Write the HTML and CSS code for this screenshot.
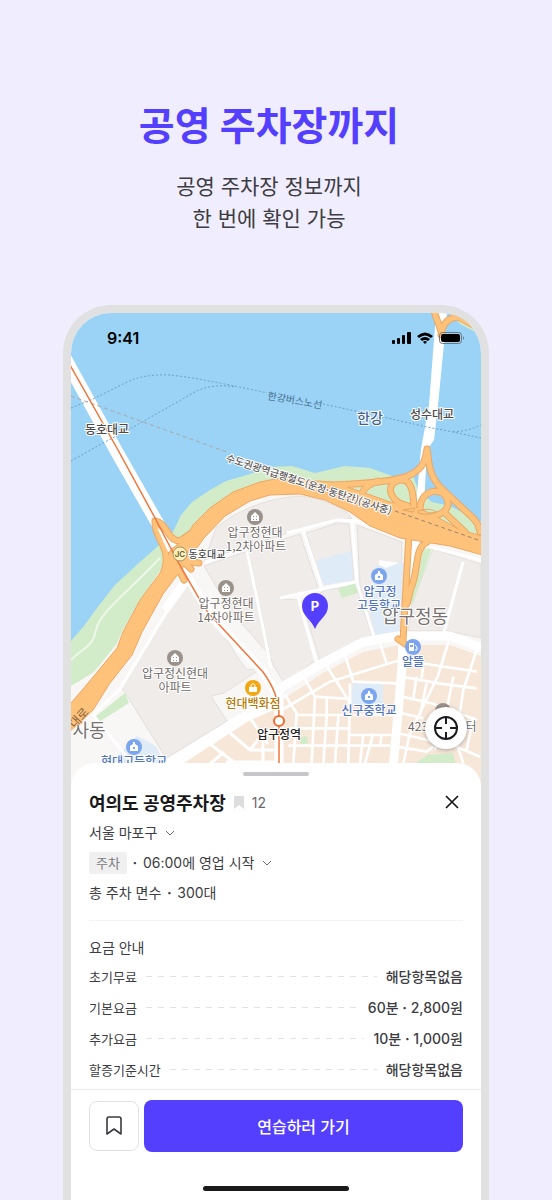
FILE: index.html
```html
<!DOCTYPE html>
<html lang="ko">

<head>
    <meta charset="UTF-8">
    <meta name="viewport" content="width=device-width, initial-scale=1">
    <title>공영 주차장까지</title>
    <link rel="stylesheet" href="styles.css">
</head>

<body>

    <header class="hero">
        <h1>공영 주차장까지</h1>
        <p>공영 주차장 정보까지<br>한 번에 확인 가능</p>
    </header>

    <main class="phone">

        <div class="map">
            <svg class="map-canvas" viewBox="71 313 410 474" preserveAspectRatio="xMidYMid slice" role="img" aria-label="압구정동 지도">
                <rect x="71" y="313" width="410" height="474" fill="#9ad3f6" />

                <!-- Tierra y parques -->
                <path fill="#d2ecc9" d="M71 641L84 626L97 608L115 585L140 562L157 547L173 532L181 515L192 502L210 490L226 481L250 474L270 467L292 466L315 473L345 466L370 468L395 477L412 472L418 490L432 502L450 506L481 522V600H180L71 740Z" />
                <path fill="#f8f7f6" d="M71 686L94 672L116 645L123 630L140 600L160 571L177 550L195 525L233 494L280 484L340 495L400 520L481 545V787H71Z" />
                <path fill="#d2ecc9" d="M450 313H481V335L460 324Z" />
                <path class="park-path" d="M71 660C86 645 92 648 96 630S125 595 160 558" />

                <!-- Manzanas -->
                <g class="block">
                    <path d="M204 562L216 528C240 508 270 498 300 496C330 500 345 510 352 518L288 533L205 560Z" />
                    <path d="M171 604L190 576L236 655L247 670L262 668L224 693L211 696L227 721L166 758L122 688Z" />
                    <path d="M204 566L248 551L268 635L267 652L232 613Z" />
                    <path d="M248 550L300 534L318 588L281 599L299 600L315 661L284 683L272 663Z" />
                    <path d="M306 533L338 523L349 524L354 580L322 584Z" />
                    <path d="M357 525L402 542L400 634L374 637L360 586Z" />
                    <path d="M326 590L356 585L372 637L320 661L302 602Z" />
                    <path d="M433 549L481 564V638L448 631L408 631L412 604Z" />
                </g>
                <g fill="#dfebf6">
                    <path d="M317 560L351 551L353 580L322 586Z" />
                    <path d="M376 566L404 562L400 634L376 637L369 610Z" />
                    <path d="M116 757L137 736L156 746L165 765H110Z" />
                </g>
                <g fill="#d2ecc9">
                    <path d="M432 548L413 603L409 605L423 549Z" />
                    <path d="M338 589L355 583L358 593L342 598Z" />
                    <path d="M95 717L125 693L129 703L99 722Z" />
                </g>
                <path fill="#ffffff" d="M379 560L399 563L386 568L379 565Z" />

                <!-- Calles blancas -->
                <g class="street">
                    <path d="M287 533L337 520L357 521L403 538" />
                    <path d="M303 530L322 587M352 520L357 583L374 637M280 598L355 582M298 597L317 665" />
                    <path d="M430 547L481 560M463 562L444 632" />
                    <path d="M205 562L248 548M247 551L263 627L271 668M172 603L120 689L93 715L132 763" />
                </g>
                <path class="street-wide" d="M178 562L212 617L263 672L276 692M190 575L165 610" />

                <!-- Barrio del sur -->
                <path fill="#f7e7d9" d="M170 770L227 735L282 700L323 673L363 652L400 645L450 645L481 656V787H165Z" />
                <path fill="#dfebf6" d="M353 683H383V705H351Z" />
                <path fill="#d2ecc9" d="M412 765L428 755L453 753L456 765ZM298 738L307 736L308 743L302 745Z" />
                <g class="street" transform="translate(270 600) scale(.3333)">
                    <path d="M35 330L180 245L390 180L620 215M165 190L235 300L240 320M225 165L250 245L380 250M330 130L350 190" />
                    <path d="M45 285L80 340L70 490M100 230L135 290L240 297M135 290L125 490M80 345H240M170 290V350L160 490M240 300L235 490M205 350L195 490" />
                    <path d="M60 385H235M55 437H360M240 405H365M310 400L285 490M280 405L270 490M335 405L330 440" />
                    <path d="M240 250V350M250 345H370M540 110L505 225L420 400L400 490M395 230L505 250L620 265M395 290L485 310L620 360" />
                    <path d="M440 230L430 295M395 340L460 355M470 250L450 345M385 400L560 440L630 470M380 440L470 455L490 440" />
                    <path d="M620 150L580 270L565 370M550 230L530 330M460 190L455 235M560 430L580 490M610 350L590 450M500 420L495 450" />
                </g>
                <g class="street">
                    <path d="M180 764L210 744L235 763M209 745L250 718L268 744M230 733L250 750H281M250 719L279 706M210 764L224 752M250 750L262 735H280M226 762H276M263 737V765" />
                </g>
                <path class="street-wide" d="M160 769L227 727L273 700L282 687L323 663L363 642L397 636L450 636L481 648" />
                <path class="street-wide" d="M403 640L402 667L393 770M279 695V770" />

                <!-- Puentes -->
                <path class="bridge" d="M60 349L118 454L158 524L182 570" />
                <path fill="#ffffff" d="M436 313H447L438 405L434 440L427 450L424 505H416L421 449L423 438L429 405Z" />
                <path fill="#ffffff" d="M412 536H420L413 570L409 603H404Z" />

                <!-- Autopista y rampas -->
                <g class="ramp-edge">
                    <path d="M434 311L442 334M441 335Q443 318 458 317L473 325" />
                    <path d="M427 449C425 463 422 468 412 474S380 483 333 485M427 449C429 466 430 476 440 487L473 518Q479 524 480 532" />
                    <path d="M361 495Q365 485 378 481M408 506C390 502 385 486 397 481S413 487 414 506M420 508C421 490 440 487 446 497S444 516 428 516" />
                    <path d="M446 514L465 532" />
                    <path d="M409 535L405 603L403 641M427 542C414 548 419 570 411 588L407 604M398 639L405 644" />
                    <path d="M155 521C154 542 175 546 162 578M155 521C168 523 166 540 180 541L196 530M184 561L199 563M184 562L191 569M177 566L184 580" />
                </g>
                <path class="highway" d="M66 709L94 676L117 648L123 632L140 600L160 573L171 549L185 540L193 525L210 508L233 492L260 482L280 478L303 480L333 482L362 492L390 502L413 506L432 514L460 530L486 537V556L450 546L400 538L370 526L350 512L325 500L300 494L270 495L250 501L225 516L204 538L187 562L163 594L142 632L132 655L110 683L93 710L66 735Z" />
                <g class="ramp">
                    <path d="M434 311L442 334M441 335Q443 318 458 317L473 325" />
                    <path d="M427 449C425 463 422 468 412 474S380 483 333 485M427 449C429 466 430 476 440 487L473 518Q479 524 480 532" />
                    <path d="M361 495Q365 485 378 481M408 506C390 502 385 486 397 481S413 487 414 506M420 508C421 490 440 487 446 497S444 516 428 516" />
                    <path d="M446 514L465 532" />
                    <path d="M409 535L405 603L403 641M427 542C414 548 419 570 411 588L407 604M398 639L405 644" />
                    <path d="M155 521C154 542 175 546 162 578M155 521C168 523 166 540 180 541L196 530M184 561L199 563M184 562L191 569M177 566L184 580" />
                </g>
                <path fill="#ffffff" d="M157 527L163 533L169 543L171 549L168 552L163 541Z" />
                <path d="M403 510L415 508L413 512ZM418 511Q428 507 437 512Q428 516 418 513Z" fill="none" stroke="#e5a866" />

                <!-- Rutas de barco y tren -->
                <g class="ferry">
                    <path d="M71 461L103 443L137 425L193 393Q210 383 235 387M71 408L93 399L127 382Q143 374 170 375Q200 378 267 393" />
                    <path d="M323 404L383 417L427 427L453 432L481 438M453 432Q468 431 481 425" />
                </g>
                <path class="rail" d="M71 396L143 422L227 452" />
                <path class="rail rail-land" d="M395 511L481 541" />
                <path class="metro" d="M66 358L118 450L155 518L178 562L200 600Q206 611 213 618L263 672Q279 694 279 715V787" />

                <!-- Iconos -->
                <g fill="#9a928a">
                    <circle cx="255" cy="517" r="8" />
                    <circle cx="226" cy="588" r="8" />
                    <circle cx="175" cy="658" r="8" />
                    <circle cx="443" cy="711" r="8" />
                </g>
                <g class="house">
                    <path d="M251 516L255 512L259 516V521H251Z" />
                    <path d="M222 587L226 583L230 587V592H222Z" />
                    <path d="M171 657L175 653L179 657V662H171Z" />
                </g>
                <g fill="#9a928a">
                    <path d="M253 516H254V517H253ZM256 516H257V517H256ZM253 519H254V520H253ZM256 519H257V520H256Z" />
                    <path d="M224 587H225V588H224ZM227 587H228V588H227ZM224 590H225V591H224ZM227 590H228V591H227Z" />
                    <path d="M173 657H174V658H173ZM176 657H177V658H176ZM173 660H174V661H173ZM176 660H177V661H176Z" />
                </g>
                <g fill="#7ba5ee">
                    <circle cx="379" cy="576" r="8" />
                    <circle cx="134" cy="747" r="8" />
                    <circle cx="369" cy="696" r="8" />
                    <circle cx="413" cy="647" r="8" />
                </g>
                <g fill="#ffffff">
                    <path d="M375 575L378 573V571H380V573L383 575V580H375Z" />
                    <path d="M130 746L133 744V742H135V744L138 746V751H130Z" />
                    <path d="M365 695L368 693V691H370V693L373 695V700H365Z" />
                    <path d="M409 643H414V651H409Z" />
                </g>
                <path d="M415 645L417 647V650H415M410 645H413" fill="none" stroke="#ffffff" />
                <path d="M410 645H413V647H410ZM378 576H380V578H378ZM133 747H135V749H133ZM368 696H370V698H368Z" fill="#7ba5ee" />
                <circle cx="253" cy="688" r="8" fill="#f3a712" />
                <path d="M249 687H257V692H249Z" fill="#ffffff" />
                <path d="M251 687V685Q253 682 255 685V687" fill="none" stroke="#ffffff" />
                <circle cx="279" cy="721" r="5" fill="#ffffff" stroke="#ef6b2d" stroke-width="2" />

                <!-- Textos del mapa -->
                <g class="label">
                    <text x="107" y="434">동호대교</text>
                    <text x="432" y="419">성수대교</text>
                    <text class="river" x="370" y="423">한강</text>
                    <text class="route" x="295" y="404" transform="rotate(10 295 400)">한강버스노선</text>
                    <text class="train" x="309" y="488" transform="rotate(18 309 484)">수도권광역급행철도(운정·동탄간)(공사중)</text>
                    <text class="small" x="207" y="558">동호대교</text>
                    <text class="apt" x="255" y="537">압구정현대</text>
                    <text class="apt" x="256" y="551">1,2차아파트</text>
                    <text class="apt" x="226" y="608">압구정현대</text>
                    <text class="apt" x="226" y="622">14차아파트</text>
                    <text class="apt" x="175" y="678">압구정신현대</text>
                    <text class="apt" x="175" y="692">아파트</text>
                    <text class="school" x="380" y="596">압구정</text>
                    <text class="school" x="379" y="610">고등학교</text>
                    <text class="school" x="369" y="715">신구중학교</text>
                    <text class="school" x="413" y="666">알뜰</text>
                    <text class="school" x="134" y="766">현대고등학교</text>
                    <text class="store" x="253" y="708">현대백화점</text>
                    <text class="station" x="279" y="739">압구정역</text>
                    <text class="district" x="415" y="623">압구정동</text>
                    <text class="district" x="89" y="737">사동</text>
                    <text class="road" x="79" y="722" transform="rotate(-47 79 718)">대로</text>
                    <text class="apt" x="418" y="731">423</text>
                    <text class="apt" x="471" y="731">터</text>
                </g>
                <circle cx="180" cy="554" r="7" fill="#fdf0b8" stroke="#a59567" />
                <text class="jc" x="180" y="557">JC</text>

                <path d="M315 629C311 619 302 616 302 606A13 13 0 0 1 328 606C328 616 319 619 315 629Z" fill="#553fff" />
                <text class="pin-text" x="315" y="611">P</text>
            </svg>

            <div class="status-bar">
                <span>9:41</span>
                <svg width="73" height="14" viewBox="0 0 73 14" aria-hidden="true">
                    <rect x="0" y="9" width="3" height="4" rx="1" />
                    <rect x="5" y="7" width="3" height="6" rx="1" />
                    <rect x="10" y="4" width="3" height="9" rx="1" />
                    <rect x="15" y="1" width="4" height="12" rx="1" />
                    <path d="M25 5Q33 -2 41 5L39 7Q33 2 27 7ZM28 8Q33 4 38 8L36 10Q33 8 30 10ZM31 11Q33 9 35 11L33 13Z" />
                    <rect x="47.5" y="1.5" width="22" height="11" rx="3" fill="none" stroke="#6d777c" />
                    <rect x="49" y="3" width="19" height="8" rx="2" />
                    <path d="M71 5Q73 7 71 9Z" fill="#6d777c" />
                </svg>
            </div>

            <button class="locate" type="button" aria-label="현재 위치">
                <svg width="26" height="26" viewBox="0 0 26 26" fill="none" stroke="#1b1b1f" stroke-width="2" aria-hidden="true">
                    <circle cx="13" cy="13" r="11" />
                    <path d="M13 2V9M13 17V24M2 13H9M17 13H24" />
                </svg>
            </button>
        </div>

        <section class="sheet">
            <div class="handle"></div>

            <div class="title-row">
                <h2>여의도 공영주차장</h2>
                <svg width="10" height="13" viewBox="0 0 10 13" aria-hidden="true">
                    <path d="M0 1Q0 0 1 0H9Q10 0 10 1V13L5 9L0 13Z" fill="#dddddf" />
                </svg>
                <span class="count">12</span>
                <button class="close" type="button" aria-label="닫기">
                    <svg width="14" height="14" viewBox="0 0 14 14" fill="none" stroke="#111111" stroke-width="1.6" aria-hidden="true">
                        <path d="M1 1L13 13M13 1L1 13" />
                    </svg>
                </button>
            </div>

            <button class="info" type="button">서울 마포구
                <svg class="chevron" width="10" height="6" viewBox="0 0 10 6" aria-hidden="true"><path d="M1 1L5 5L9 1" /></svg>
            </button>
            <button class="info" type="button"><span class="badge">주차</span><span class="dot">·</span>06:00에 영업 시작
                <svg class="chevron" width="10" height="6" viewBox="0 0 10 6" aria-hidden="true"><path d="M1 1L5 5L9 1" /></svg>
            </button>
            <p class="info">총 주차 면수 <span class="dot">·</span>300대</p>

            <div class="fees">
                <h3>요금 안내</h3>
                <dl>
                    <div class="fee"><dt>초기무료</dt><dd>해당항목없음</dd></div>
                    <div class="fee"><dt>기본요금</dt><dd>60분 <b>·</b> 2,800원</dd></div>
                    <div class="fee"><dt>추가요금</dt><dd>10분 <b>·</b> 1,000원</dd></div>
                    <div class="fee"><dt>할증기준시간</dt><dd>해당항목없음</dd></div>
                </dl>
            </div>

            <div class="actions">
                <button class="save" type="button" aria-label="저장">
                    <svg width="16" height="20" viewBox="0 0 16 20" fill="none" stroke="#3a3a40" stroke-width="1.6" stroke-linejoin="round" aria-hidden="true">
                        <path d="M1 3Q1 1 3 1H13Q15 1 15 3V18L8 13L1 18Z" />
                    </svg>
                </button>
                <button class="go" type="button">연습하러 가기</button>
            </div>

            <div class="home-bar"></div>
        </section>

    </main>

</body>

</html>
```
FILE: styles.css
```css
* {
    box-sizing: border-box;
}

body {
    margin: 0;
    min-height: 100vh;
    display: flex;
    flex-direction: column;
    background-color: #f0eefe;
    color: #3c3c42;
    font-family: Inter, "Noto Sans CJK KR", sans-serif;
}

h1, h2, h3, p, dl, dd {
    margin: 0;
}

button {
    font-family: inherit;
    color: inherit;
    border: 0;
    padding: 0;
    background: none;
    cursor: pointer;
}

.hero {
    padding: 96px 34px 70px 20px;
    text-align: center;
}

.hero h1 {
    font-size: 39px;
    line-height: 60px;
    font-weight: 700;
    color: #553fff;
}

.hero p {
    margin-top: 15px;
    font-size: 21px;
    line-height: 32px;
}

.phone {
    flex: 1;
    display: flex;
    flex-direction: column;
    margin: 0 63px;
    border: 8px solid #e1e1e1;
    border-bottom: 0;
    border-radius: 48px 48px 0 0;
    background-color: #ffffff;
    overflow: hidden;
}

/* Mapa */
.map {
    position: relative;
}

.map-canvas {
    display: block;
    width: 100%;
}

.block {
    fill: #f0ecea;
    stroke: #e3dfdd;
}

.park-path {
    fill: none;
    stroke: #eef7ea;
    stroke-width: 2;
}

.street {
    fill: none;
    stroke: #ffffff;
    stroke-width: 3;
}

.street[transform] {
    stroke-width: 8;
}

.street-wide {
    fill: none;
    stroke: #ffffff;
    stroke-width: 9;
    stroke-linejoin: round;
}

.bridge {
    fill: none;
    stroke: #ffffff;
    stroke-width: 13;
}

.highway {
    fill: #ffc27a;
    stroke: #eba763;
}

.ramp-edge,
.ramp {
    fill: none;
    stroke-linecap: round;
    stroke: #eba763;
    stroke-width: 7;
}

.ramp {
    stroke: #ffc27a;
    stroke-width: 5;
}

.ferry {
    fill: none;
    stroke: #6c9fc2;
    stroke-dasharray: 2 2;
}

.rail {
    fill: none;
    stroke: #a9a7a5;
    stroke-dasharray: 4 3;
}

.rail-land {
    stroke: #96836f;
}

.metro {
    fill: none;
    stroke: #f2763a;
    stroke-width: 1.5;
}

.house {
    fill: #ffffff;
}

.label {
    font-family: "Noto Sans CJK KR", sans-serif;
    font-size: 12px;
    font-weight: 500;
    text-anchor: middle;
    fill: #4c4a4a;
    stroke: #ffffff;
    stroke-width: 2px;
    stroke-linejoin: round;
    paint-order: stroke;
}

.river {
    font-size: 14px;
    fill: #3f6496;
}

.route {
    font-size: 10px;
    font-weight: 400;
    fill: #4c7190;
    stroke: #9ad3f6;
}

.train {
    font-size: 10px;
    fill: #5f5b5b;
}

.small {
    font-size: 10px;
}

.apt {
    font-weight: 400;
    fill: #716a67;
}

.school {
    fill: #4f74c2;
}

.store {
    fill: #b97a08;
}

.station {
    fill: #222222;
}

.district {
    font-size: 18px;
    font-weight: 400;
    fill: #77726f;
}

.road {
    font-weight: 400;
    fill: #805f3c;
    stroke: #ffc27a;
}

.jc {
    font-size: 8px;
    font-weight: 600;
    text-anchor: middle;
    fill: #6b5b35;
}

.pin-text {
    font-size: 13px;
    font-weight: 700;
    text-anchor: middle;
    fill: #ffffff;
}

.status-bar {
    position: absolute;
    top: 14px;
    left: 36px;
    right: 16px;
    display: flex;
    justify-content: space-between;
    align-items: center;
    font-size: 16px;
    line-height: 22px;
    font-weight: 600;
    color: #000000;
}

.locate {
    position: absolute;
    right: 14px;
    bottom: 38px;
    width: 42px;
    height: 42px;
    display: grid;
    place-items: center;
    border-radius: 50%;
    background-color: #ffffff;
    box-shadow: 0 1px 4px rgba(0, 0, 0, 0.3);
}

/* Panel inferior */
.sheet {
    position: relative;
    flex: 1;
    margin-top: -24px;
    padding: 9px 18px;
    border-radius: 24px 24px 0 0;
    background-color: #ffffff;
    font-size: 14px;
}

.handle {
    width: 66px;
    height: 4px;
    margin: 0 auto 12px;
    border-radius: 2px;
    background-color: #c6c6c8;
}

.title-row {
    display: flex;
    align-items: center;
    gap: 8px;
    height: 28px;
}

.title-row h2 {
    font-size: 18px;
    font-weight: 700;
    color: #19191c;
}

.count {
    color: #68686e;
}

.close {
    width: 22px;
    height: 22px;
    margin-left: auto;
    display: grid;
    place-items: center;
}

.info {
    display: flex;
    align-items: center;
    height: 30px;
    font-size: 14px;
    line-height: 30px;
}

.title-row + .info {
    margin-top: 2px;
}

.badge {
    padding: 0 7px;
    line-height: 22px;
    font-size: 13px;
    border-radius: 2px;
    background-color: #f0f0f0;
    color: #7a7a80;
}

.dot {
    width: 16px;
    text-align: center;
    font-weight: 700;
}

.chevron {
    margin-left: 8px;
    fill: none;
    stroke: #68686e;
}

.fees {
    margin-top: 12px;
    padding-top: 14px;
    border-top: 1px solid #f3f3f3;
}

.fees h3 {
    font-size: 14px;
    line-height: 26px;
    font-weight: 400;
}

.fee {
    display: flex;
    align-items: center;
    gap: 9px;
    height: 31px;
    line-height: 20px;
}

.fee::before {
    content: "";
    order: 1;
    flex: 1;
    height: 1px;
    background: repeating-linear-gradient(90deg, #e2e2e2 0 6px, transparent 6px 12px);
}

.fee dt {
    font-size: 13px;
}

.fee dd {
    order: 2;
    font-weight: 500;
}

.actions {
    display: flex;
    align-items: center;
    gap: 5px;
    margin: 4px -18px 0;
    padding: 10px 18px;
    border-top: 1px solid #ececec;
}

.save {
    width: 50px;
    height: 50px;
    display: grid;
    place-items: center;
    border: 1px solid #e2e2e4;
    border-radius: 8px;
}

.go {
    flex: 1;
    height: 52px;
    border-radius: 8px;
    background-color: #553fff;
    color: #ffffff;
    font-size: 16px;
    font-weight: 500;
}

.home-bar {
    width: 146px;
    height: 5px;
    margin: 24px auto 0;
    border-radius: 3px;
    background-color: #1a1a1a;
}
```
